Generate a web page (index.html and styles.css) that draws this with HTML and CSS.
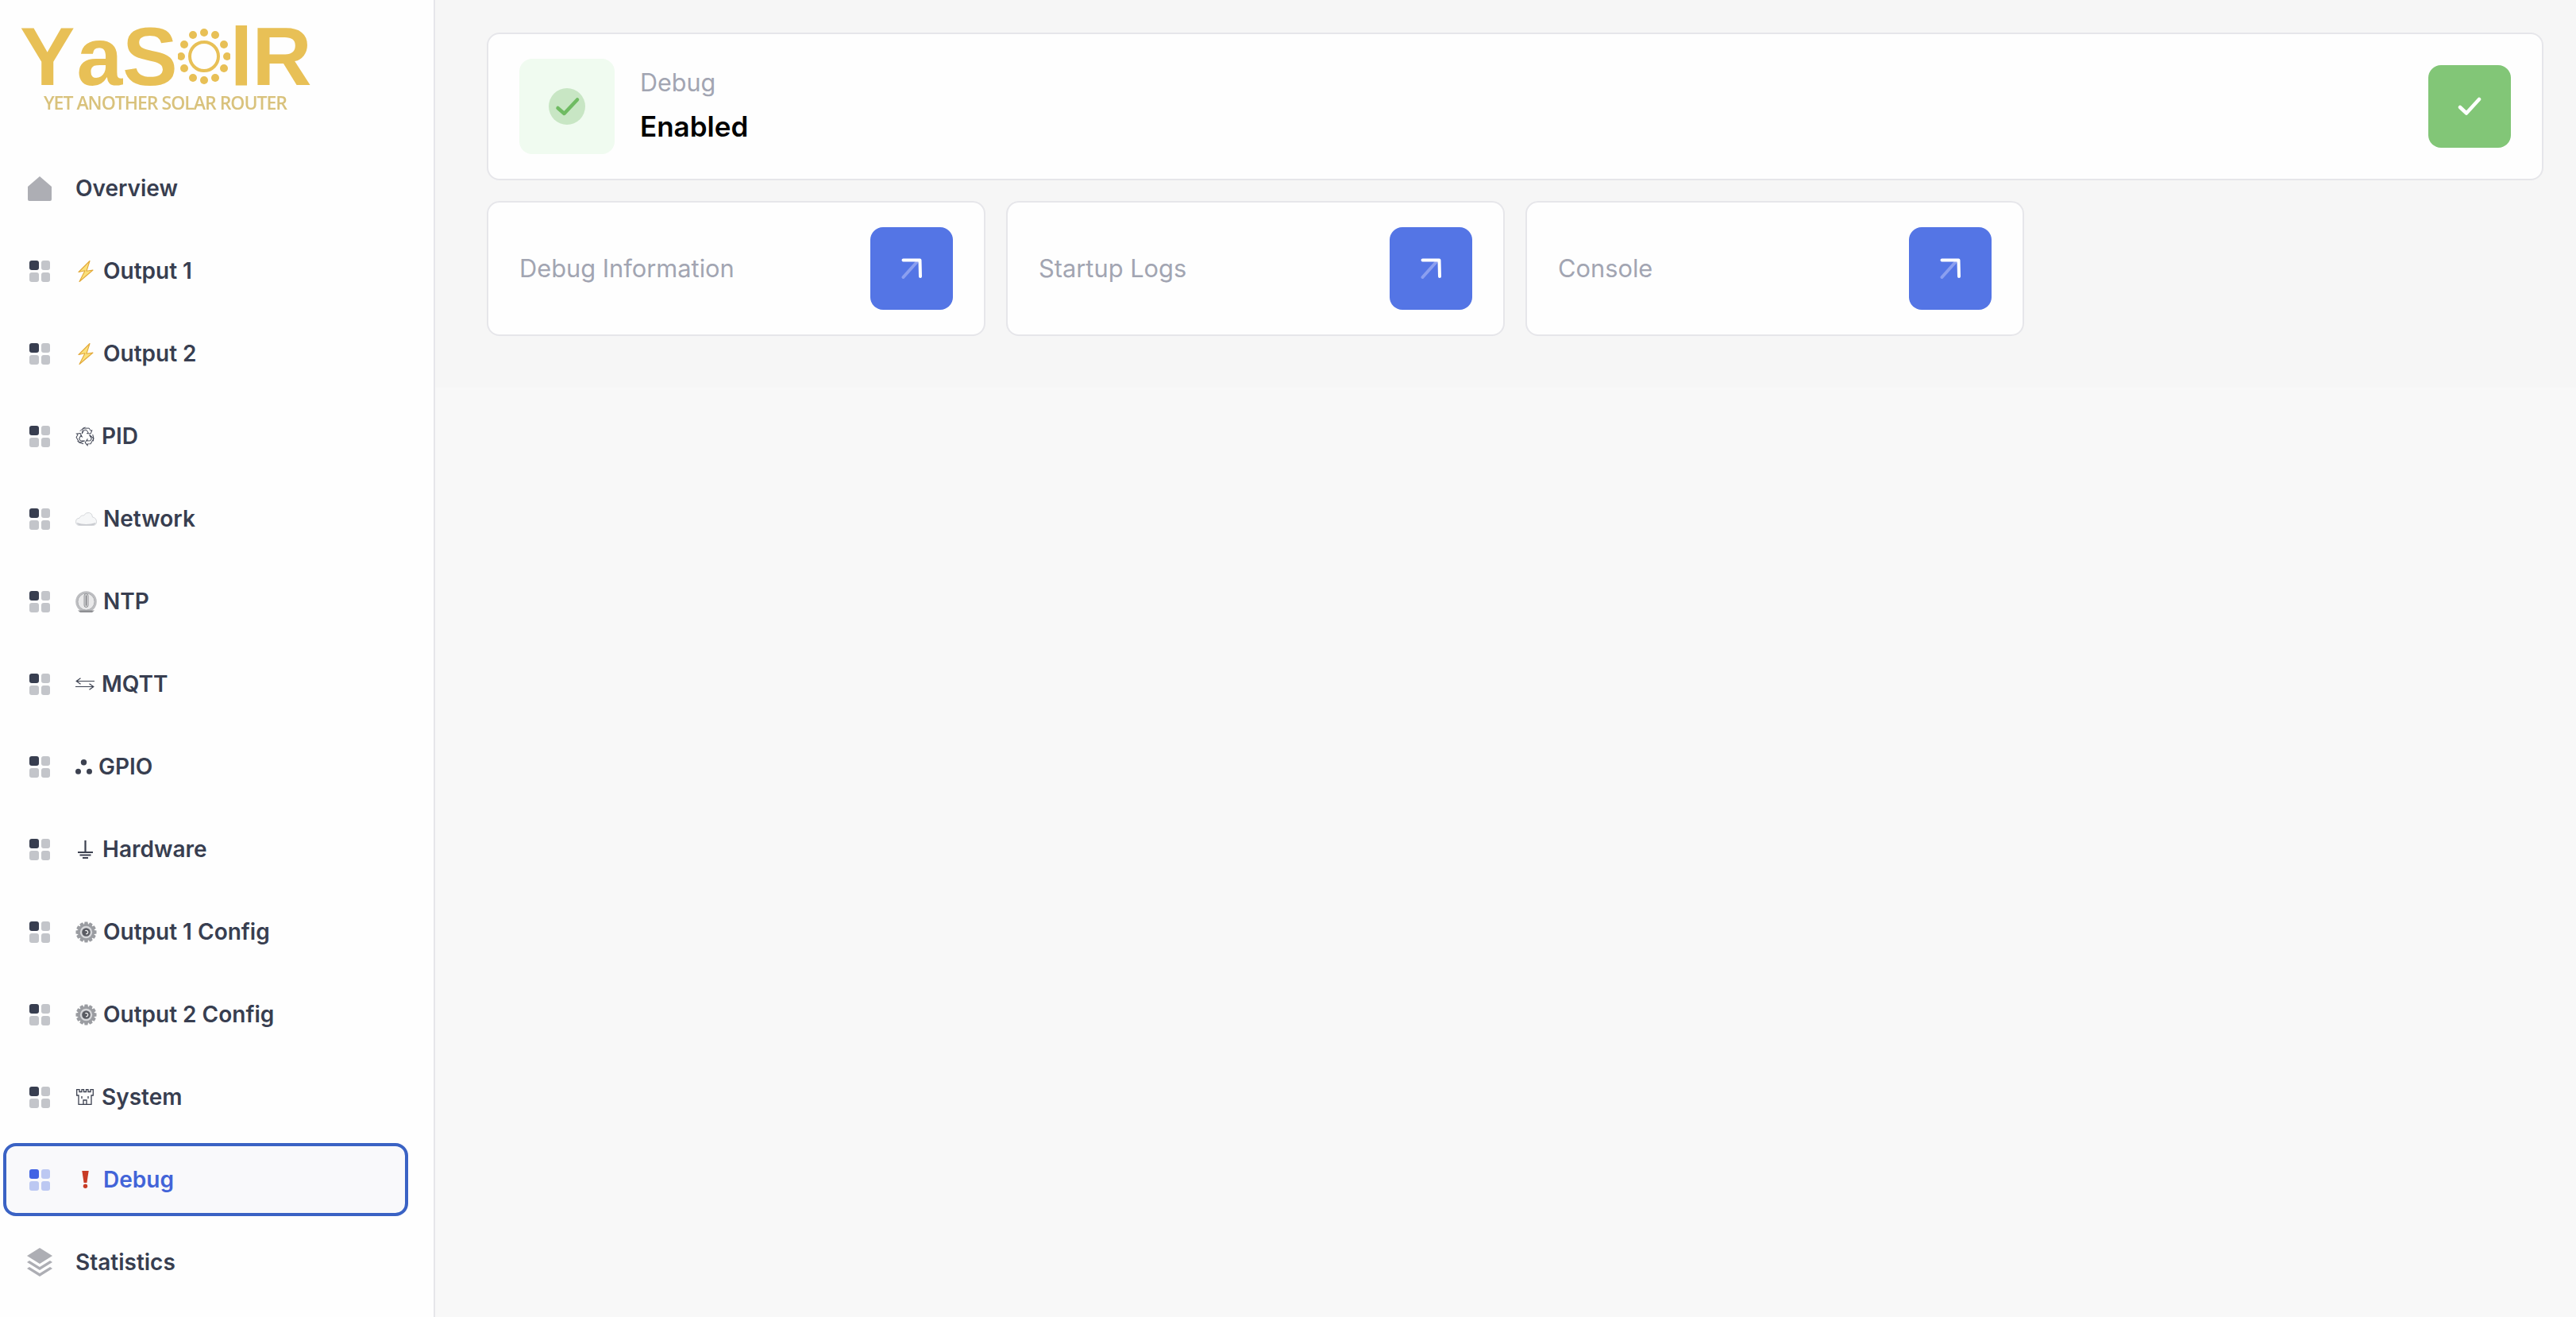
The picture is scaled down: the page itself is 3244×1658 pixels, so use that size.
FILE: index.html
```html
<!DOCTYPE html>
<html lang="en">
<head>
  <meta charset="UTF-8">
  <meta name="viewport" content="width=device-width, initial-scale=1.0">
  <title>YaSolR - Debug</title>
  <link rel="stylesheet" href="styles.css">
</head>
<body>
  <!-- Shared icons -->
  <svg class="sprite" xmlns="http://www.w3.org/2000/svg">
    <defs>
      <symbol id="i-grid" viewBox="0 0 26 27">
        <rect class="grid-main" x="0" y="0" width="12" height="12" rx="3"/>
        <rect class="grid-soft" x="15" y="0" width="11" height="12" rx="3"/>
        <rect class="grid-soft" x="0" y="15" width="12" height="12" rx="3"/>
        <rect class="grid-soft" x="15" y="15" width="11" height="12" rx="3"/>
      </symbol>
      <symbol id="i-bolt" viewBox="0 0 20 27">
        <path d="M15 .5 L1 14.5 L9 12.8 L2 26.5 L19 12 L11 13.2 Z" fill="#fbe07a" stroke="#e2a93b" stroke-width="1.1" stroke-linejoin="round"/>
      </symbol>
      <symbol id="i-gear" viewBox="0 0 28 28">
        <g fill="#9a9ca1">
          <circle cx="14" cy="14" r="10.500"/>
          <path id="gear-tooth" d="M12 .5 H16 L17 6 H11 Z"/>
          <use href="#gear-tooth" transform="rotate(30 14 14)"/>
          <use href="#gear-tooth" transform="rotate(60 14 14)"/>
          <use href="#gear-tooth" transform="rotate(90 14 14)"/>
          <use href="#gear-tooth" transform="rotate(120 14 14)"/>
          <use href="#gear-tooth" transform="rotate(150 14 14)"/>
          <use href="#gear-tooth" transform="rotate(180 14 14)"/>
          <use href="#gear-tooth" transform="rotate(210 14 14)"/>
          <use href="#gear-tooth" transform="rotate(240 14 14)"/>
          <use href="#gear-tooth" transform="rotate(270 14 14)"/>
          <use href="#gear-tooth" transform="rotate(300 14 14)"/>
          <use href="#gear-tooth" transform="rotate(330 14 14)"/>
        </g>
        <circle cx="14" cy="14" r="8" fill="#d6d7da"/>
        <circle cx="14" cy="14" r="5.500" fill="#5a5c63"/>
        <path d="M12.800 12.300 A2.200 2.200 0 1 1 13.700 16.200" fill="none" stroke="#f2f2f2" stroke-width="1.300"/>
      </symbol>
      <symbol id="i-arrow" viewBox="0 0 26 26">
        <path d="M2.500 24 L20 4.500" fill="none" stroke="#8b9ff0" stroke-width="4" stroke-linecap="round"/>
        <path d="M2.500 2.500 H23.500 L24 23" fill="none" stroke="#fff" stroke-width="4" stroke-linecap="round" stroke-linejoin="round"/>
      </symbol>
    </defs>
  </svg>

  <div class="layout">
    <aside class="sidebar">
      <div class="logo">
        <div class="logo-word">
          <span class="logo-letter">Y</span>
          <span class="logo-letter letter-a">a</span>
          <span class="logo-letter letter-s">S</span>
          <svg class="logo-sun" viewBox="0 0 66 72" xmlns="http://www.w3.org/2000/svg">
            <circle cx="33" cy="36" r="18" fill="none" stroke="#e8c056" stroke-width="4"/>
            <g fill="#e8c056">
              <circle cx="33" cy="6" r="5"/><circle cx="47" cy="9" r="5"/><circle cx="58" cy="21" r="5"/>
              <circle cx="62" cy="36" r="5"/><circle cx="58" cy="51" r="5"/><circle cx="47" cy="63" r="5"/>
              <circle cx="33" cy="66" r="5"/><circle cx="19" cy="63" r="5"/><circle cx="8" cy="51" r="5"/>
              <circle cx="4" cy="36" r="5"/><circle cx="8" cy="21" r="5"/><circle cx="19" cy="9" r="5"/>
            </g>
          </svg>
          <span class="logo-letter">l</span>
          <span class="logo-letter letter-r">R</span>
        </div>
        <div class="logo-tag">YET ANOTHER SOLAR ROUTER</div>
      </div>

      <nav class="nav">
        <a class="nav-item" href="#">
          <svg class="nav-icon" viewBox="0 0 30 31"><path d="M15 0 L30 13 V29 Q30 31 28 31 H2 Q0 31 0 29 V13 Z" fill="#adaeb4"/></svg>
          <span class="nav-label">Overview</span>
        </a>
        <a class="nav-item" href="#">
          <svg class="nav-icon grid"><use href="#i-grid"/></svg>
          <span class="nav-label"><svg class="emoji bolt"><use href="#i-bolt"/></svg>Output 1</span>
        </a>
        <a class="nav-item" href="#">
          <svg class="nav-icon grid"><use href="#i-grid"/></svg>
          <span class="nav-label"><svg class="emoji bolt"><use href="#i-bolt"/></svg>Output 2</span>
        </a>
        <a class="nav-item" href="#">
          <svg class="nav-icon grid"><use href="#i-grid"/></svg>
          <span class="nav-label">
            <svg class="emoji recycle" viewBox="0 0 26 26" fill="none" stroke="#3c4150" stroke-width="1">
              <g id="recycle-arrow">
                <path d="M8.500 9.500 L11.500 4.500 H14.500 L16.800 8 L15 9 L20 9.300 L21.800 4.800 L20 5.600 L18 2.200 H10 Z"/>
                <path d="M6 6 Q9 2 13 1"/>
              </g>
              <use href="#recycle-arrow" transform="rotate(120 13 13)"/>
              <use href="#recycle-arrow" transform="rotate(240 13 13)"/>
            </svg>PID</span>
        </a>
        <a class="nav-item" href="#">
          <svg class="nav-icon grid"><use href="#i-grid"/></svg>
          <span class="nav-label">
            <svg class="emoji cloud" viewBox="0 0 27 18">
              <path d="M5.500 17.500 Q.5 17.500 .5 12.800 Q.5 8.500 5 8.300 Q6.500 4.500 10.500 5 Q13 .5 17.500 1.500 Q21.500 2.500 21.500 7 Q26.500 8 26.500 12.800 Q26.500 17.500 21.500 17.500 Z" fill="#f6f7f8" stroke="#cdcfd3" stroke-width=".8"/>
              <path d="M1.500 14 Q13.500 18 25.500 14 Q25 17 21.500 17.200 H5.500 Q2.500 17 1.500 14 Z" fill="#c9cbd0"/>
            </svg>Network</span>
        </a>
        <a class="nav-item" href="#">
          <svg class="nav-icon grid"><use href="#i-grid"/></svg>
          <span class="nav-label">
            <svg class="emoji timer" viewBox="0 0 27 27">
              <circle cx="13.500" cy="13.500" r="13.300" fill="#bdbec1"/>
              <circle cx="13.500" cy="13.500" r="10.500" fill="#e9e9ea" stroke="#a5a6a9" stroke-width=".8"/>
              <rect x="11" y="3.500" width="5" height="17" rx="2.500" fill="#cfd0d2" stroke="#85868a" stroke-width=".8"/>
              <path d="M13.500 5.500 V18.500" stroke="#6d6e72" stroke-width="1"/>
              <path d="M3 24.500 H24 L21 27 H6 Z" fill="#8e8f93"/>
            </svg>NTP</span>
        </a>
        <a class="nav-item" href="#">
          <svg class="nav-icon grid"><use href="#i-grid"/></svg>
          <span class="nav-label">
            <svg class="emoji swap" viewBox="0 0 24 16" fill="none" stroke="#3c4150" stroke-width="1.200">
              <path d="M24 4.500 H1.500 M6.500 .7 L1.200 4.500 L6.500 8.200"/>
              <path d="M0 11.500 H22.500 M17.500 7.800 L22.800 11.500 L17.500 15.300"/>
            </svg>MQTT</span>
        </a>
        <a class="nav-item" href="#">
          <svg class="nav-icon grid"><use href="#i-grid"/></svg>
          <span class="nav-label">
            <svg class="emoji dots" viewBox="0 0 21 19" fill="#3c4150">
              <circle cx="10.500" cy="3.700" r="3.700"/><circle cx="3.500" cy="15.300" r="3.500"/><circle cx="17.500" cy="15.300" r="3.500"/>
            </svg>GPIO</span>
        </a>
        <a class="nav-item" href="#">
          <svg class="nav-icon grid"><use href="#i-grid"/></svg>
          <span class="nav-label">
            <svg class="emoji earth" viewBox="0 0 19 23" fill="none" stroke="#3c4150" stroke-width="2.200">
              <path d="M9.500 0 V15 M0 15 H19 M2.500 18.500 H16.500 M6 22 H13"/>
            </svg>Hardware</span>
        </a>
        <a class="nav-item" href="#">
          <svg class="nav-icon grid"><use href="#i-grid"/></svg>
          <span class="nav-label"><svg class="emoji gear"><use href="#i-gear"/></svg>Output 1 Config</span>
        </a>
        <a class="nav-item" href="#">
          <svg class="nav-icon grid"><use href="#i-grid"/></svg>
          <span class="nav-label"><svg class="emoji gear"><use href="#i-gear"/></svg>Output 2 Config</span>
        </a>
        <a class="nav-item" href="#">
          <svg class="nav-icon grid"><use href="#i-grid"/></svg>
          <span class="nav-label">
            <svg class="emoji castle" viewBox="0 0 22 20" fill="none" stroke="#3c4150" stroke-width="1.300">
              <path d="M.7 .7 H4 V3.500 H7 V.7 H9.500 V3.500 H12.500 V.7 H15 V3.500 H18 V.7 H21.300 V8 H19 V19.300 H3 V8 H.7 Z"/>
              <path d="M9 19 V14 H13 V19 M7 9 V12 M15 9 V12"/>
            </svg>System</span>
        </a>
        <a class="nav-item active" href="#">
          <svg class="nav-icon grid"><use href="#i-grid"/></svg>
          <span class="nav-label">
            <svg class="emoji bang" viewBox="0 0 9 22" fill="#c83c26">
              <path d="M.3 0 H8.700 L6.400 15 H2.600 Z"/><circle cx="4.500" cy="19.300" r="2.700"/>
            </svg>Debug</span>
        </a>
        <a class="nav-item" href="#">
          <svg class="nav-icon stack" viewBox="0 0 32 36" fill="#adaeb4">
            <path d="M16 0 L32 10 L16 20 L0 10 Z"/>
            <path d="M3 16 L16 24 L29 16 L32 18 L16 28 L0 18 Z"/>
            <path d="M3 24 L16 32 L29 24 L32 26 L16 36 L0 26 Z"/>
          </svg>
          <span class="nav-label">Statistics</span>
        </a>
      </nav>
    </aside>

    <main class="content">
      <div class="panel">
        <section class="card status-card">
          <div class="status-badge">
            <svg class="status-tick" viewBox="0 0 46 46">
              <circle cx="23" cy="23" r="23" fill="#c8e6c4"/>
              <path d="M11.500 25 L19.500 32 L36 14.500" fill="none" stroke="#6fbb62" stroke-width="4.500" stroke-linecap="round" stroke-linejoin="round"/>
            </svg>
          </div>
          <div class="status-text">
            <div class="status-title">Debug</div>
            <div class="status-value">Enabled</div>
          </div>
          <button class="square-btn green" type="button">
            <svg viewBox="0 0 30 24" width="30" height="24"><path d="M3 13 L11 20.500 L27 3" fill="none" stroke="#fff" stroke-width="4.500" stroke-linecap="round" stroke-linejoin="round"/></svg>
          </button>
        </section>

        <div class="link-row">
          <section class="card link-card">
            <span class="link-title">Debug Information</span>
            <button class="square-btn blue" type="button"><svg class="arrow"><use href="#i-arrow"/></svg></button>
          </section>
          <section class="card link-card">
            <span class="link-title">Startup Logs</span>
            <button class="square-btn blue" type="button"><svg class="arrow"><use href="#i-arrow"/></svg></button>
          </section>
          <section class="card link-card">
            <span class="link-title">Console</span>
            <button class="square-btn blue" type="button"><svg class="arrow"><use href="#i-arrow"/></svg></button>
          </section>
        </div>
      </div>
    </main>
  </div>
</body>
</html>
```

FILE: styles.css
```css
html, body {
  height: 100%;
}
body {
  margin: 0;
  background-color: #f8f8f8;
  color: #383e50;
  font-family: Inter, "Liberation Sans", sans-serif;
}
.sprite {
  display: none;
}
.layout {
  display: flex;
  height: 100%;
}

/* Sidebar */
.sidebar {
  box-sizing: border-box;
  flex: 0 0 548px;
  padding: 31px 32px 0 4px;
  background-color: #fefefe;
  border-right: 2px solid #e6e6ea;
}
.logo {
  box-sizing: border-box;
  height: 160px;
  padding-left: 21px;
  color: #e8c056;
  filter: blur(0.5px);
}
.logo-word {
  display: flex;
  align-items: flex-start;
  height: 80px;
}
.logo-letter {
  font-family: "Liberation Sans", sans-serif;
  font-size: 104px;
  font-weight: 700;
  line-height: 80px;
}
.letter-a {
  margin-left: 2px;
}
.letter-r {
  margin-left: -1px;
}
.logo-sun {
  width: 66px;
  height: 72px;
  margin-top: 4px;
}
.logo-tag {
  margin: 5px 0 0 30px;
  color: #d9c27c;
  font-family: "Open Sans", sans-serif;
  font-size: 23px;
  font-weight: 600;
  line-height: 26px;
  letter-spacing: -1px;
  white-space: nowrap;
}
.nav {
  display: flex;
  flex-direction: column;
  gap: 12px;
}
.nav-item {
  --grid-main: #383e50;
  --grid-soft: #c3c5ca;
  box-sizing: border-box;
  display: flex;
  align-items: center;
  height: 92px;
  padding-left: 27px;
  border: 4px solid transparent;
  border-radius: 16px;
  color: #383e50;
  font-size: 28px;
  font-weight: 600;
  text-decoration: none;
}
.nav-item.active {
  --grid-main: #4264e4;
  --grid-soft: #bcc8f2;
  background-color: #f9f9fb;
  border-color: #3a62c4;
  color: #4264d8;
}
.nav-icon {
  flex: none;
  width: 30px;
  height: 31px;
  margin-right: 30px;
}
.nav-icon.grid {
  height: 27px;
}
.nav-icon.stack {
  width: 32px;
  height: 36px;
  margin-left: -1px;
  margin-right: 29px;
}
.grid-main {
  fill: var(--grid-main);
}
.grid-soft {
  fill: var(--grid-soft);
}
.nav-label {
  display: flex;
  align-items: center;
  white-space: nowrap;
}

/* Emoji in front of the labels */
.emoji {
  flex: none;
}
.bolt {
  width: 20px;
  height: 27px;
  margin: 0 12px 0 3px;
}
.recycle {
  width: 25px;
  height: 25px;
  margin-right: 8px;
}
.cloud {
  width: 27px;
  height: 18px;
  margin-right: 8px;
}
.timer {
  width: 27px;
  height: 27px;
  margin-right: 8px;
}
.swap {
  width: 24px;
  height: 16px;
  margin-right: 9px;
}
.dots {
  width: 21px;
  height: 19px;
  margin-right: 8px;
}
.earth {
  width: 19px;
  height: 23px;
  margin: 0 12px 0 3px;
}
.gear {
  width: 27px;
  height: 27px;
  margin-right: 8px;
}
.castle {
  width: 22px;
  height: 20px;
  margin: 0 10px 0 1px;
}
.bang {
  width: 9px;
  height: 22px;
  margin: 0 18px 0 8px;
}

/* Main content */
.content {
  flex: 1;
  min-width: 0;
}
.panel {
  padding: 41px 41px 65px 65px;
  background-color: #f6f6f6;
}
.card {
  box-sizing: border-box;
  display: flex;
  align-items: center;
  background-color: #fefefe;
  border: 2px solid #e6e6ea;
  border-radius: 16px;
}
.status-card {
  height: 186px;
  padding: 0 39px;
}
.status-badge {
  display: flex;
  flex: none;
  align-items: center;
  justify-content: center;
  width: 120px;
  height: 120px;
  background-color: #f0fbf0;
  border-radius: 16px;
}
.status-tick {
  width: 46px;
  height: 46px;
}
.status-text {
  flex: 1;
  margin-left: 32px;
}
.status-title {
  margin-top: -3px;
  color: #a2a5b2;
  font-size: 30.5px;
  line-height: 44px;
}
.status-value {
  margin-top: 9px;
  color: #000;
  font-size: 35px;
  font-weight: 600;
  line-height: 48px;
}
.square-btn {
  display: flex;
  flex: none;
  align-items: center;
  justify-content: center;
  width: 104px;
  height: 104px;
  padding: 0;
  border: 0;
  border-radius: 16px;
}
.square-btn.green {
  background-color: #82c677;
}
.square-btn.blue {
  background-color: #5475e5;
}
.arrow {
  width: 26px;
  height: 26px;
}
.link-row {
  display: flex;
  gap: 26px;
  margin-top: 26px;
}
.link-card {
  justify-content: space-between;
  width: 628px;
  height: 170px;
  padding: 0 39px;
}
.link-title {
  margin-top: -2px;
  color: #a2a5b2;
  font-size: 30.8px;
  white-space: nowrap;
}
```
